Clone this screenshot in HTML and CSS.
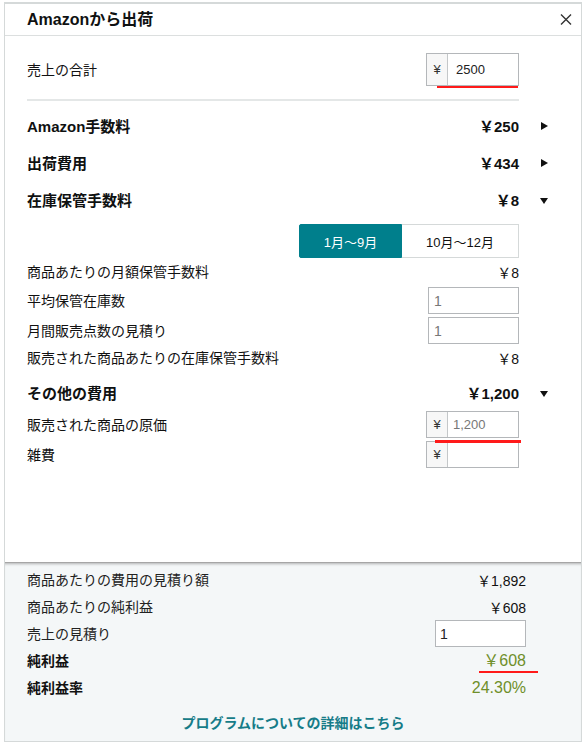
FILE: index.html
```html
<!DOCTYPE html>
<html lang="ja">
<head>
<meta charset="utf-8">
<title>Amazonから出荷</title>
<link rel="stylesheet" href="styles.css">
</head>
<body>
<div class="panel">
  <div class="header">
    <h1 class="title">Amazonから出荷</h1>
    <svg class="close" width="12" height="11" viewBox="0 0 12 11"><path d="M1 0.5L11 10.5M11 0.5L1 10.5"/></svg>
  </div>

  <div class="content">
    <div class="row row-sales">
      <span class="label">売上の合計</span>
      <div class="field money tall mark mark-sales"><span class="prefix">¥</span><span class="val dark">2500</span></div>
    </div>

    <div class="divider"></div>

    <div class="heads">
      <div class="row row-head">
        <span class="head-label">Amazon手数料</span>
        <span class="head-value">￥250</span>
        <svg class="arrow" width="7" height="8" viewBox="0 0 7 8"><path d="M0 0L7 4L0 8Z"/></svg>
      </div>
      <div class="row row-head">
        <span class="head-label">出荷費用</span>
        <span class="head-value">￥434</span>
        <svg class="arrow" width="7" height="8" viewBox="0 0 7 8"><path d="M0 0L7 4L0 8Z"/></svg>
      </div>
      <div class="row row-head">
        <span class="head-label">在庫保管手数料</span>
        <span class="head-value">￥8</span>
        <svg class="arrow down" width="8" height="6" viewBox="0 0 8 6"><path d="M0 0H8L4 6Z"/></svg>
      </div>
    </div>

    <div class="toggle">
      <span class="tog active">1月～9月</span>
      <span class="tog">10月～12月</span>
    </div>

    <div class="row sub sub-a">
      <span class="label">商品あたりの月額保管手数料</span>
      <span class="value">￥8</span>
    </div>
    <div class="row sub sub-b">
      <span class="label">平均保管在庫数</span>
      <div class="field plain"><span class="val">1</span></div>
    </div>
    <div class="row sub sub-c">
      <span class="label">月間販売点数の見積り</span>
      <div class="field plain"><span class="val">1</span></div>
    </div>
    <div class="row sub sub-d">
      <span class="label">販売された商品あたりの在庫保管手数料</span>
      <span class="value">￥8</span>
    </div>

    <div class="row row-head row-other">
      <span class="head-label">その他の費用</span>
      <span class="head-value">￥1,200</span>
      <svg class="arrow down" width="8" height="6" viewBox="0 0 8 6"><path d="M0 0H8L4 6Z"/></svg>
    </div>
    <div class="row sub sub-e">
      <span class="label">販売された商品の原価</span>
      <div class="field money mark mark-cost"><span class="prefix">¥</span><span class="val">1,200</span></div>
    </div>
    <div class="row sub sub-f">
      <span class="label">雑費</span>
      <div class="field money"><span class="prefix">¥</span><span class="val"></span></div>
    </div>
  </div>

  <div class="footer">
    <div class="foot-rows">
      <div class="foot-row">
        <span class="label">商品あたりの費用の見積り額</span>
        <span class="value">￥1,892</span>
      </div>
      <div class="foot-row">
        <span class="label">商品あたりの純利益</span>
        <span class="value">￥608</span>
      </div>
      <div class="foot-row">
        <span class="label">売上の見積り</span>
        <div class="field plain foot-field"><span class="val dark">1</span></div>
      </div>
      <div class="foot-row">
        <span class="label strong">純利益</span>
        <span class="green mark mark-profit">￥608</span>
      </div>
      <div class="foot-row">
        <span class="label strong">純利益率</span>
        <span class="green">24.30%</span>
      </div>
    </div>
    <div class="foot-link">プログラムについての詳細はこちら</div>
  </div>
</div>
</body>
</html>
```

FILE: styles.css
```css
* {
  box-sizing: border-box;
}

html,
body {
  margin: 0;
  padding: 0;
  background: #fff;
}

body {
  width: 584px;
  height: 747px;
  overflow: hidden;
  font-family: "Liberation Sans", "Noto Sans CJK JP", sans-serif;
  font-size: 14px;
  color: #111;
}

.panel {
  margin: 2px 2px 0 4px;
  height: 740px;
  border: 1px solid #d5d9d9;
  border-top: 2px solid #d5d9d9;
  display: flex;
  flex-direction: column;
}

/* header */
.header {
  height: 32px;
  flex: none;
  border-bottom: 1px solid #dcdfdf;
  display: flex;
  align-items: center;
  justify-content: space-between;
  padding: 0 9px 0 22px;
}

.title {
  margin: 0;
  font-size: 16px;
  font-weight: bold;
  line-height: 20px;
  color: #0f1111;
}

.close path {
  stroke: #333;
  stroke-width: 1.4;
  fill: none;
}

/* main content */
.content {
  flex: 1;
  padding: 0 12px 0 22px;
}

.row {
  display: grid;
  grid-template-columns: 1fr auto 50px;
  align-items: center;
}

.label {
  line-height: 18px;
  color: #111;
}

.row-sales {
  margin-top: 17px;
  height: 33px;
}

.divider {
  margin: 13px 50px 0 0;
  height: 2px;
  background: #e4e7e7;
}

.heads {
  padding-top: 6px;
}

.row-head {
  height: 37px;
  font-size: 15px;
  font-weight: bold;
  color: #0f1111;
}

.head-value {
  font-size: 15px;
  font-weight: bold;
}

.arrow {
  justify-self: center;
  fill: #111;
}

.arrow.down {
  margin-top: 3px;
}

.toggle {
  display: flex;
  width: 220px;
  height: 34px;
  margin: 6px 50px 0 auto;
}

.tog {
  display: flex;
  align-items: center;
  justify-content: center;
  font-size: 13px;
  color: #111;
  border: 1px solid #d5d9d9;
  border-left: none;
  width: 117px;
  background: #fff;
}

.tog.active {
  width: 103px;
  background: #007f8c;
  border: 1px solid #007f8c;
  color: #fff;
  border-radius: 2px 0 0 2px;
}

.sub {
  font-size: 14px;
}

.sub-a { margin-top: 1px; height: 26px; }
.sub-b { margin-top: 2px; height: 27px; }
.sub-c { margin-top: 3px; height: 27px; }
.sub-d { margin-top: 1px; height: 26px; }
.row-other { margin-top: 3px; }
.sub-e { margin-top: 0; height: 27px; }
.sub-f { margin-top: 3px; height: 27px; }

.value {
  font-size: 14px;
  color: #111;
}

/* input-like fields */
.field {
  display: flex;
  align-items: stretch;
  height: 27px;
  border: 1px solid #b4b7ba;
  background: #fff;
  font-size: 13px;
}

.field.money {
  width: 93px;
}

.field.tall {
  height: 33px;
}

.field.plain {
  width: 91px;
  font-size: 14px;
}

.prefix {
  width: 21px;
  flex: none;
  display: flex;
  align-items: center;
  justify-content: center;
  background: #f7f7f7;
  border-right: 1px solid #c4c7c9;
  color: #333;
}

.val {
  display: flex;
  align-items: center;
  padding-left: 5px;
  color: #777;
}

.val.dark {
  color: #222;
}

.field.tall .val {
  padding-left: 8px;
}

/* red annotation underlines */
.mark {
  position: relative;
}

.mark::after {
  content: "";
  position: absolute;
  background: #ff1a1a;
}

.mark-sales::after {
  left: 10px;
  right: 0;
  top: calc(100% + 1px);
  height: 2px;
}

.mark-cost::after {
  left: 8px;
  right: -3px;
  top: calc(100% + 3px);
  height: 3px;
}

.mark-profit::after {
  left: -4px;
  right: -12px;
  top: 100%;
  height: 2px;
}

/* footer */
.footer {
  height: 179px;
  flex: none;
  background: #f4f7f8;
  border-top: 1px solid #a6a6a6;
  box-shadow: inset 0 3px 3px -2px rgba(0, 0, 0, 0.28);
  padding-top: 3px;
}

.foot-rows {
  padding: 0 55px 0 22px;
}

.foot-row {
  display: grid;
  grid-template-columns: 1fr auto;
  align-items: center;
  height: 27px;
}

.foot-row .label {
  color: #222;
}

.label.strong {
  font-weight: bold;
  color: #111;
}

.foot-field {
  background: #fff;
}

.foot-field .val {
  padding-left: 4px;
}

.green {
  font-size: 16px;
  line-height: 20px;
  color: #6f8f2a;
}

.foot-link {
  margin-top: 12px;
  text-align: center;
  font-size: 14px;
  font-weight: bold;
  line-height: 20px;
  color: #167c88;
}
```
